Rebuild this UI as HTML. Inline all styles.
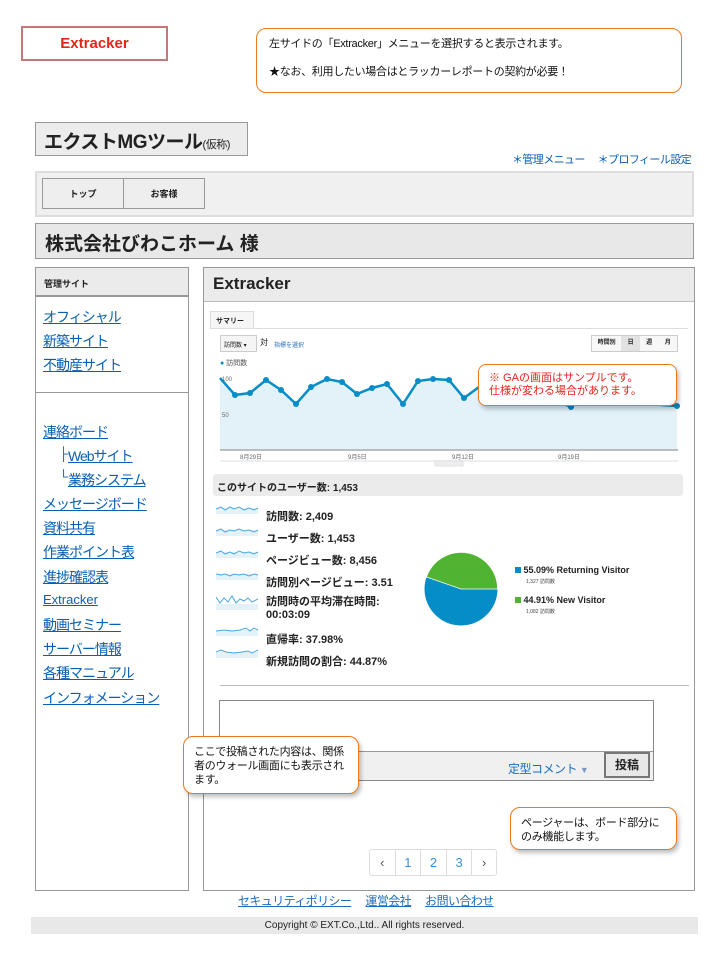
<!DOCTYPE html>
<html><head><meta charset="utf-8"><style>
*{margin:0;padding:0;box-sizing:border-box}
body{width:720px;height:960px;background:#fff;position:relative;font-family:"Liberation Sans","Noto Sans CJK JP",sans-serif;color:#222;overflow:hidden}
.a{position:absolute}
.lk{color:#0a5fb4;text-decoration:underline;font-size:14px;letter-spacing:-1px;white-space:nowrap}
.call{border:1.5px solid #e87a1e;border-radius:10px;background:#fff;box-shadow:2px 3px 4px rgba(0,0,0,.25);font-size:11px;line-height:14px;color:#111}
.sm{font-size:11px;font-weight:bold;color:#222;white-space:nowrap}
</style></head><body>

<div class="a" style="left:21px;top:26px;width:147px;height:35px;border:2px solid #c07a7a;text-align:center;line-height:31px;color:#e8231a;font-size:15px;font-weight:bold">Extracker</div>
<div class="a call" style="left:256px;top:28px;width:426px;height:65px;box-shadow:none;padding:8px 12px;font-size:11px;line-height:14px;letter-spacing:-0.3px">左サイドの「Extracker」メニューを選択すると表示されます。<br><br>★なお、利用したい場合はとラッカーレポートの契約が必要！</div>

<div class="a" style="left:35px;top:122px;width:213px;height:34px;border:1px solid #999;background:#ececec;font-size:19px;font-weight:bold;padding:4px 8px;white-space:nowrap;letter-spacing:-0.5px">エクストMGツール<span style="font-size:11px;font-weight:normal">(仮称)</span></div>
<div class="a" style="left:512px;top:151px;font-size:11px;letter-spacing:-0.6px;color:#0a5fb4;white-space:nowrap">＊管理メニュー　 ＊プロフィール設定</div>

<div class="a" style="left:35px;top:171px;width:659px;height:46px;border:2px solid #ddd;background:#f0f0f0"></div>
<div class="a" style="left:42px;top:178px;width:82px;height:31px;border:1px solid #999;background:#eee;font-size:9px;font-weight:bold;text-align:center;line-height:30px">トップ</div>
<div class="a" style="left:123px;top:178px;width:82px;height:31px;border:1px solid #999;background:#eee;font-size:9px;font-weight:bold;text-align:center;line-height:30px">お客様</div>

<div class="a" style="left:35px;top:223px;width:659px;height:36px;border:1px solid #999;background:#e8e8e8;font-size:19px;font-weight:bold;padding:5px 9px">株式会社びわこホーム 様</div>

<!-- sidebar -->
<div class="a" style="left:35px;top:267px;width:154px;height:624px;border:1px solid #999"></div>
<div class="a" style="left:36px;top:268px;width:152px;height:29px;background:#ebebeb;border-bottom:2px solid #999;font-size:9px;font-weight:bold;padding:9px 8px">管理サイト</div>
<div class="a" style="left:36px;top:392px;width:152px;border-top:1px solid #999"></div>
<a class="a lk" style="left:43px;top:307px">オフィシャル</a>
<a class="a lk" style="left:43px;top:331px">新築サイト</a>
<a class="a lk" style="left:43px;top:355px">不動産サイト</a>
<a class="a lk" style="left:43px;top:422px">連絡ボード</a>
<span class="a" style="left:59px;top:446px;color:#0a5fb4;font-size:13px">├</span><a class="a lk" style="left:68px;top:446px">Webサイト</a>
<span class="a" style="left:59px;top:469px;color:#0a5fb4;font-size:13px">└</span><a class="a lk" style="left:68px;top:470px">業務システム</a>
<a class="a lk" style="left:43px;top:494px">メッセージボード</a>
<a class="a lk" style="left:43px;top:518px">資料共有</a>
<a class="a lk" style="left:43px;top:542px">作業ポイント表</a>
<a class="a lk" style="left:43px;top:567px">進捗確認表</a>
<a class="a lk" style="left:43px;top:592px;font-size:13px;letter-spacing:0">Extracker</a>
<a class="a lk" style="left:43px;top:615px">動画セミナー</a>
<a class="a lk" style="left:43px;top:639px">サーバー情報</a>
<a class="a lk" style="left:43px;top:663px">各種マニュアル</a>
<a class="a lk" style="left:43px;top:688px">インフォメーション</a>

<!-- main -->
<div class="a" style="left:203px;top:267px;width:492px;height:624px;border:1px solid #999"></div>
<div class="a" style="left:204px;top:268px;width:490px;height:34px;background:#ebebeb;border-bottom:1px solid #bbb;font-size:17px;font-weight:bold;padding:6px 9px">Extracker</div>

<div class="a" style="left:210px;top:311px;width:44px;height:18px;border:1px solid #ddd;border-bottom:none;background:#f6f6f6;font-size:7px;font-weight:bold;padding:4px 5px">サマリー</div>
<div class="a" style="left:210px;top:328px;width:478px;border-top:1px solid #ddd"></div>
<div class="a" style="left:220px;top:335px;width:37px;height:17px;border:1px solid #ccc;background:#f5f5f5;font-size:6px;padding:4px 3px">訪問数 ▾</div>
<div class="a" style="left:260px;top:337px;font-size:8px">対</div>
<div class="a" style="left:274px;top:340px;font-size:6px;color:#2a6fb8">指標を選択</div>
<div class="a" style="left:591px;top:335px;width:87px;height:17px;border:1px solid #ccc;background:#f7f7f7;font-size:6px;font-weight:bold;display:flex">
<span style="width:30px;text-align:center;line-height:15px">時間別</span><span style="width:19px;text-align:center;line-height:15px;background:#e2e2e2">日</span><span style="width:19px;text-align:center;line-height:15px">週</span><span style="width:19px;text-align:center;line-height:15px">月</span></div>
<div class="a" style="left:220px;top:358px;font-size:7px;color:#555"><span style="color:#058dc7">●</span> 訪問数</div>

<svg class="a" style="left:210px;top:370px" width="480" height="100">
<line x1="10" y1="41" x2="468" y2="41" stroke="#ddd"/>
<polygon fill="#e3f1f9" points="10,8 25,25 40,23 56,10 71,20 86,34 101,17 117,9 132,12 147,24 162,18 177,14 193,34 208,11 223,9 239,10 254,28 269,17 284,10 300,15 315,20 330,25 345,30 361,37 376,25 391,30 406,28 422,25 437,30 452,35 467,36 467,80 10,80"/>
<polyline fill="none" stroke="#058dc7" stroke-width="2.5" points="10,8 25,25 40,23 56,10 71,20 86,34 101,17 117,9 132,12 147,24 162,18 177,14 193,34 208,11 223,9 239,10 254,28 269,17 284,10 300,15 315,20 330,25 345,30 361,37 376,25 391,30 406,28 422,25 437,30 452,35 467,36"/>
<g fill="#058dc7"><circle cx="25" cy="25" r="3"/><circle cx="40" cy="23" r="3"/><circle cx="56" cy="10" r="3"/><circle cx="71" cy="20" r="3"/><circle cx="86" cy="34" r="3"/><circle cx="101" cy="17" r="3"/><circle cx="117" cy="9" r="3"/><circle cx="132" cy="12" r="3"/><circle cx="147" cy="24" r="3"/><circle cx="162" cy="18" r="3"/><circle cx="177" cy="14" r="3"/><circle cx="193" cy="34" r="3"/><circle cx="208" cy="11" r="3"/><circle cx="223" cy="9" r="3"/><circle cx="239" cy="10" r="3"/><circle cx="254" cy="28" r="3"/><circle cx="361" cy="37" r="3"/><circle cx="467" cy="36" r="3"/></g>
<line x1="10" y1="80" x2="468" y2="80" stroke="#aaa" stroke-width="1.5"/>
<line x1="10" y1="91" x2="468" y2="91" stroke="#ddd"/>
<text x="12" y="11" font-size="6" fill="#666">100</text><text x="12" y="47" font-size="6" fill="#666">50</text>
<g font-size="6" fill="#666"><text x="30" y="89">8月29日</text><text x="138" y="89">9月5日</text><text x="242" y="89">9月12日</text><text x="348" y="89">9月19日</text></g>
<rect x="225" y="91" width="28" height="5" fill="#eee" stroke="#ccc" stroke-width=".5"/>
</svg>

<div class="a call" style="left:478px;top:364px;width:199px;height:42px;padding:7px 10px;color:#e8231a;font-size:11px;line-height:13px;border-radius:8px">※ GAの画面はサンプルです。<br>仕様が変わる場合があります。</div>

<div class="a" style="left:213px;top:474px;width:470px;height:22px;background:#ebebeb;border-radius:3px;font-size:10px;font-weight:bold;padding:5px 4px">このサイトのユーザー数: 1,453</div>

<svg class="a" style="left:216px;top:504px" width="44" height="160" fill="none" stroke="#4ba8dc" stroke-width="1">
<rect x="0" y="4" width="42" height="6" fill="#e3f1f9" stroke="none"/><polyline points="0,5 5,3 9,6 14,3 18,5 23,3 28,6 33,4 38,6 42,4"/>
<rect x="0" y="26" width="42" height="6" fill="#e3f1f9" stroke="none"/><polyline points="0,27 5,25 9,28 14,26 18,27 23,25 28,27 33,26 38,28 42,26"/>
<rect x="0" y="48" width="42" height="6" fill="#e3f1f9" stroke="none"/><polyline points="0,49 5,47 9,50 14,48 18,50 23,47 28,49 33,48 38,50 42,48"/>
<rect x="0" y="70" width="42" height="6" fill="#e3f1f9" stroke="none"/><polyline points="0,70 5,71 9,70 14,72 18,70 23,71 28,70 33,72 38,70 42,71"/>
<rect x="0" y="100" width="42" height="6" fill="#e3f1f9" stroke="none"/><polyline points="0,93 4,99 8,94 12,98 16,92 20,99 24,95 28,97 32,94 36,98 42,95"/>
<rect x="0" y="126" width="42" height="6" fill="#e3f1f9" stroke="none"/><polyline points="0,127 8,126 16,127 24,126 30,124 34,127 38,124 42,126"/>
<rect x="0" y="148" width="42" height="6" fill="#e3f1f9" stroke="none"/><polyline points="0,148 5,146 10,148 18,149 26,148 32,147 36,149 42,146"/>
</svg>
<div class="a sm" style="left:266px;top:508px">訪問数: 2,409</div>
<div class="a sm" style="left:266px;top:530px">ユーザー数: 1,453</div>
<div class="a sm" style="left:266px;top:552px">ページビュー数: 8,456</div>
<div class="a sm" style="left:266px;top:574px">訪問別ページビュー: 3.51</div>
<div class="a sm" style="left:266px;top:596px;line-height:13px">訪問時の平均滞在時間:<br>00:03:09</div>
<div class="a sm" style="left:266px;top:631px">直帰率: 37.98%</div>
<div class="a sm" style="left:266px;top:653px">新規訪問の割合: 44.87%</div>

<svg class="a" style="left:424px;top:552px" width="75" height="75">
<circle cx="37" cy="37" r="36.5" fill="#058dc7"/>
<path d="M37,37 L73.5,37 A36.5,36.5 0 0 0 2.5,25 Z" fill="#50b432" stroke="#fff" stroke-width=".7"/>
</svg>
<div class="a" style="left:515px;top:565px;font-size:9px;font-weight:bold;white-space:nowrap"><span style="display:inline-block;width:6px;height:6px;background:#058dc7"></span> 55.09% Returning Visitor</div>
<div class="a" style="left:526px;top:578px;font-size:5px;color:#444">1,327 訪問数</div>
<div class="a" style="left:515px;top:595px;font-size:9px;font-weight:bold;white-space:nowrap"><span style="display:inline-block;width:6px;height:6px;background:#50b432"></span> 44.91% New Visitor</div>
<div class="a" style="left:526px;top:608px;font-size:5px;color:#444">1,082 訪問数</div>

<div class="a" style="left:220px;top:685px;width:469px;border-top:1px solid #bbb"></div>
<div class="a" style="left:219px;top:700px;width:435px;height:81px;border:1px solid #888"></div>
<div class="a" style="left:220px;top:751px;width:433px;height:29px;background:#f0f0f0;border-top:1px solid #999"></div>
<div class="a" style="left:508px;top:760px;font-size:12px;letter-spacing:-0.5px;color:#1a6ec0">定型コメント <span style="font-size:9px;color:#7a9ac0">▼</span></div>
<div class="a" style="left:604px;top:752px;width:46px;height:26px;border:2px solid #777;background:#e8e8e8;font-size:12px;font-weight:bold;text-align:center;line-height:22px">投稿</div>

<div class="a call" style="left:183px;top:736px;width:176px;height:58px;padding:8px 10px;letter-spacing:-0.3px">ここで投稿された内容は、関係者のウォール画面にも表示されます。</div>
<div class="a call" style="left:510px;top:807px;width:167px;height:43px;padding:8px 10px;letter-spacing:-0.3px">ページャーは、ボード部分にのみ機能します。</div>

<div class="a" style="left:369px;top:849px;width:128px;height:27px;border:1px solid #ddd;border-radius:3px;display:flex;font-size:13px;color:#3a8fd8">
<span style="width:26px;text-align:center;line-height:25px;color:#555;border-right:1px solid #ddd">‹</span><span style="width:26px;text-align:center;line-height:25px;border-right:1px solid #ddd">1</span><span style="width:26px;text-align:center;line-height:25px;border-right:1px solid #ddd">2</span><span style="width:26px;text-align:center;line-height:25px;border-right:1px solid #ddd">3</span><span style="width:24px;text-align:center;line-height:25px;color:#555">›</span></div>

<div class="a" style="left:238px;top:892px;font-size:12px;letter-spacing:-0.6px;color:#1a6ec0;white-space:nowrap"><u>セキュリティポリシー</u>　 <u>運営会社</u>　 <u>お問い合わせ</u></div>
<div class="a" style="left:31px;top:917px;width:667px;height:17px;background:#e8e8e8;text-align:center;font-size:10px;line-height:18px">Copyright © EXT.Co.,Ltd.. All rights reserved.</div>
</body></html>
